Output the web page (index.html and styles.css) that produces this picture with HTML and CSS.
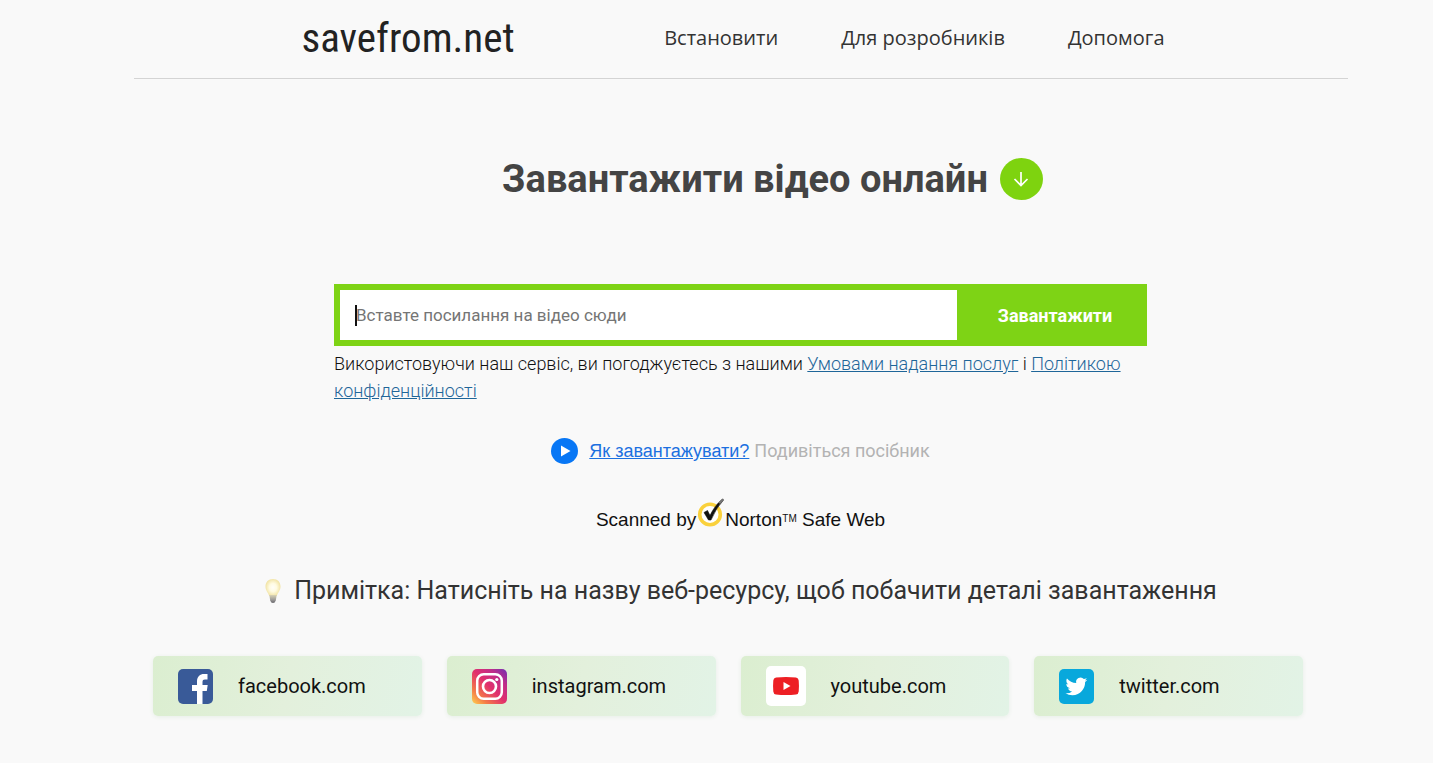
FILE: index.html
```
<!DOCTYPE html>
<html lang="uk">
<head>
<meta charset="utf-8">
<meta name="viewport" content="width=device-width, initial-scale=1">
<title>savefrom.net</title>
<link rel="stylesheet" href="styles.css">
</head>
<body>
<div class="page">
  <header class="header">
    <a class="logo" href="#">savefrom.net</a>
    <nav class="nav">
      <a href="#">Встановити</a>
      <a href="#">Для розробників</a>
      <a href="#">Допомога</a>
    </nav>
  </header>
  <main class="main">
    <div class="hero">
      <h1 class="title">Завантажити відео онлайн</h1>
      <svg class="arrow" viewBox="0 0 43 42" aria-hidden="true"><ellipse cx="21.500" cy="21" rx="21.500" ry="21" fill="#7ed30f"/><path d="M21 14v13M14.500 21l6.500 6.500 6.500-6.500" fill="none" stroke="#fff" stroke-width="1.700"/></svg>
    </div>
    <div class="download">
      <form class="form">
        <div class="field"><input class="url" type="text" aria-label="Посилання на відео" placeholder="Вставте посилання на відео сюди"></div>
        <button class="submit" type="button">Завантажити</button>
      </form>
      <p class="terms">Використовуючи наш сервіс, ви погоджуєтесь з нашими <a href="#">Умовами надання послуг</a> і <a href="#">Політикою конфіденційності</a></p>
    </div>
    <div class="guide">
      <svg class="play" viewBox="0 0 27 26" aria-hidden="true"><ellipse cx="13.500" cy="13" rx="13.500" ry="13" fill="#0877f5"/><path d="M10 7.500l9.500 5.500-9.500 5.500z" fill="#fff"/></svg>
      <a href="#">Як завантажувати?</a>
      <span class="guide-note">Подивіться посібник</span>
    </div>
    <div class="norton">
      <span>Scanned by</span>
      <svg class="check" viewBox="0 0 28 30" aria-hidden="true"><circle cx="13" cy="16.500" r="10.300" fill="#fff" stroke="#fad13c" stroke-width="3.600"/><path d="M7 14.500l3.500-2 2.500 5Q18 7 25.500 1L26.500 2Q19 10 14 22h-2.500z" fill="#111" stroke="#111" stroke-width=".6"/><path d="M21.500 4.500l4.500-4 .7 1.500-3.700 4z" fill="#777"/></svg>
      <span>Norton<span class="tm">TM</span> Safe Web</span>
    </div>
    <div class="note">
      <svg class="bulb" viewBox="0 0 18 26" aria-hidden="true">
        <defs><radialGradient id="glow" cx=".5" cy=".5" r=".6"><stop offset="0" stop-color="#fffef8"/><stop offset=".4" stop-color="#fffbe2"/><stop offset=".8" stop-color="#f3e6ab"/><stop offset="1" stop-color="#ead98c"/></radialGradient><linearGradient id="base" x1="0" y1="0" x2="0" y2="1"><stop offset="0" stop-color="#d9d3b4"/><stop offset=".6" stop-color="#9c9a98"/><stop offset="1" stop-color="#66656a"/></linearGradient></defs>
        <path d="M9 1C4.500 1 1.500 4 1.500 8.500c0 4 2.500 6 3.800 9.500h7.400c1.300-3.500 3.800-5.500 3.800-9.500C16.500 4 13.500 1 9 1z" fill="url(#glow)"/><path d="M5.300 17h7.400l-.9 5.500Q11 25 9 25t-2.800-2.500z" fill="url(#base)"/>
      </svg>
      <p>Примітка: Натисніть на назву веб-ресурсу, щоб побачити деталі завантаження</p>
    </div>
  </main>
  <div class="sites">
    <a class="site" href="#">
      <svg class="icon" viewBox="0 0 35 35" aria-hidden="true"><rect width="35" height="35" rx="5" fill="#395a98"/><path d="M19 35V22h-5v-6h5v-3.500C19 7.500 22 5 26 5h3.500v5.500H27c-1.800 0-2.500.8-2.500 2.500v3h5.200l-.9 6h-4.300v13z" fill="#fff"/></svg>
      <span>facebook.com</span>
    </a>
    <a class="site" href="#">
      <svg class="icon" viewBox="0 0 35 35" aria-hidden="true"><defs><linearGradient id="insta" x1="0" y1="1" x2="1" y2="0"><stop offset="0" stop-color="#ffd34f"/><stop offset=".22" stop-color="#f47b48"/><stop offset=".5" stop-color="#e1306c"/><stop offset=".75" stop-color="#c12c88"/><stop offset="1" stop-color="#7131b4"/></linearGradient></defs><rect width="35" height="35" rx="5" fill="url(#insta)"/><rect x="5.200" y="5.200" width="24.600" height="24.600" rx="6.500" fill="none" stroke="#fff" stroke-width="2.500"/><circle cx="17.500" cy="17.500" r="6.500" fill="none" stroke="#fff" stroke-width="2.600"/><circle cx="24.800" cy="10.500" r="1.600" fill="#fff"/></svg>
      <span>instagram.com</span>
    </a>
    <a class="site" href="#">
      <svg class="icon icon-large" viewBox="0 0 40 40" aria-hidden="true"><rect width="40" height="40" rx="5" fill="#fff"/><path d="M10 11.500Q20 10.500 30 11.500q2.500.5 2.700 3 .5 5.500 0 11-.2 2.500-2.700 3-10 1-20 0-2.500-.5-2.700-3-.5-5.500 0-11 .2-2.500 2.700-3z" fill="#ed1f24"/><path d="M17.500 16l7 4-7 4z" fill="#fff"/></svg>
      <span>youtube.com</span>
    </a>
    <a class="site" href="#">
      <svg class="icon" viewBox="0 0 35 35" aria-hidden="true"><rect width="35" height="35" rx="5" fill="#08a8dc"/><path transform="translate(6.500 6.500) scale(.91)" d="M23.950 4.570a10 10 0 0 1-2.820.77 4.960 4.960 0 0 0 2.160-2.720c-.95.550-2 .96-3.130 1.180a4.920 4.920 0 0 0-8.380 4.480C7.690 8.090 4.070 6.130 1.640 3.160a4.820 4.820 0 0 0-.67 2.480c0 1.710.87 3.210 2.190 4.100a4.900 4.900 0 0 1-2.230-.62v.06a4.920 4.920 0 0 0 3.950 4.830 5 5 0 0 1-2.210.08 4.940 4.940 0 0 0 4.600 3.420A9.870 9.870 0 0 1 0 19.540a14 14 0 0 0 7.550 2.210c9.050 0 14-7.500 14-13.980 0-.21 0-.42-.02-.63a9.940 9.940 0 0 0 2.420-2.570z" fill="#fff"/></svg>
      <span>twitter.com</span>
    </a>
  </div>
</div>
</body>
</html>
```
FILE: styles.css
```
* { box-sizing: border-box; }
body {
  margin: 0;
  background: #f9f9f9;
  color: #222;
  font-family: Roboto, "Liberation Sans", sans-serif;
}
p, h1 { margin: 0; }
.page { padding: 0 0 40px 48px; }
.header {
  display: flex;
  align-items: center;
  max-width: 1214px;
  height: 79px;
  margin: 0 auto;
  padding: 0 168px 2px;
  border-bottom: 1px solid #d4d4d4;
}
.logo {
  flex: none;
  color: #222;
  font: 41px/76px "Roboto Condensed", "Liberation Sans Narrow", "DejaVu Sans Condensed", sans-serif;
  text-decoration: none;
}
.nav {
  display: flex;
  gap: 63px;
  margin-left: auto;
  padding-right: 15px;
  font: 20px/28px "Open Sans", "Noto Sans", sans-serif;
  white-space: nowrap;
}
.nav a { color: #333; text-decoration: none; }
.main {
  display: flex;
  flex-direction: column;
  align-items: center;
}
.hero {
  display: flex;
  align-items: center;
  gap: 12px;
  padding: 78px 0 0 64px;
}
.title { color: #444; font-size: 38px; line-height: 44px; }
.arrow { width: 43px; height: 42px; }
.download { width: 100%; max-width: 813px; padding-top: 83px; }
.form { display: flex; height: 62px; background: #7ed315; }
.field { position: relative; flex: 1; padding: 6px 0 6px 6px; }
.field::before {
  content: "";
  position: absolute;
  left: 21px;
  top: 21px;
  width: 2px;
  height: 21px;
  background: #111;
}
.url {
  width: 100%;
  height: 50px;
  padding: 0 16px;
  border: 0;
  background: #fff;
  font: 17px/24px Roboto, sans-serif;
}
.url::placeholder { color: #757575; }
.submit {
  width: 190px;
  padding: 2px 0 0 6px;
  border: 0;
  background: transparent;
  color: #fff;
  font: 700 18px/24px Roboto, sans-serif;
}
.terms { padding-top: 4px; color: #111; font-size: 18px; font-weight: 300; line-height: 27px; }
.terms a { color: #1f6699; }
.guide {
  display: flex;
  align-items: center;
  padding-top: 33px;
  font-size: 18px;
  line-height: 28px;
}
.play { width: 27px; height: 26px; margin-right: 11px; }
.guide a { margin-right: 5px; color: #1c70e0; font-family: "Liberation Sans", Arial, sans-serif; }
.guide-note { color: #b3b3b3; }
.norton {
  display: flex;
  align-items: flex-end;
  padding-top: 33px;
  color: #111;
  font: 19px/22px "Liberation Sans", Arial, sans-serif;
}
.norton > span { margin-bottom: 1px; }
.check { width: 28px; height: 30px; margin: 0 0 4px 1px; }
.tm { font-size: 10px; line-height: 10px; vertical-align: 4px; }
.note {
  display: flex;
  align-items: center;
  gap: 12px;
  padding-top: 42px;
  color: #333;
  font-size: 25px;
  line-height: 34px;
}
.bulb { width: 18px; height: 26px; }
.sites {
  display: grid;
  grid-template-columns: repeat(4, 1fr);
  gap: 25px;
  max-width: 1175px;
  margin: 0 auto;
  padding: 48px 25px 0 0;
}
.site {
  display: flex;
  align-items: center;
  gap: 25px;
  height: 60px;
  padding: 0 25px;
  border-radius: 5px;
  background: linear-gradient(100deg, #dbeed0, #e3f0dc 50%, #e2f3e6);
  box-shadow: 0 1px 4px #e6eee6;
  color: #111;
  font-size: 20px;
  line-height: 24px;
  text-decoration: none;
}
.icon { flex: none; width: 35px; height: 35px; }
.icon-large { width: 40px; height: 40px; }
```
